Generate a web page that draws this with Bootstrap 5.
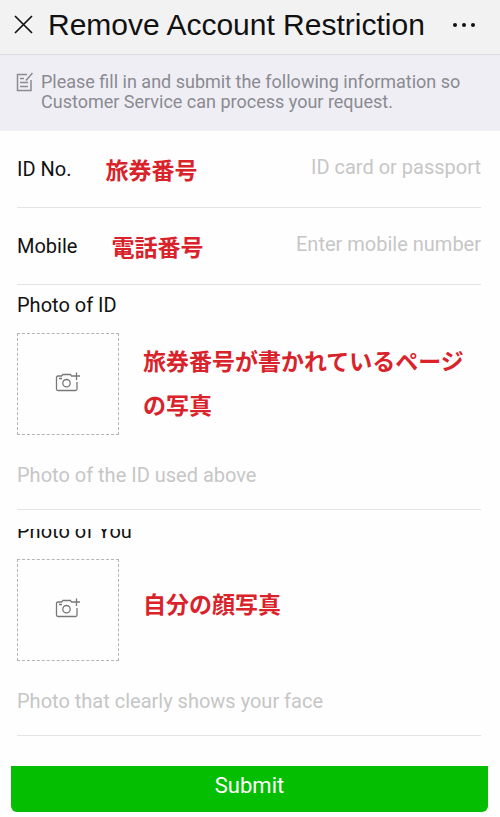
<!DOCTYPE html>
<html lang="en">
<head>
<meta charset="utf-8">
<meta name="viewport" content="width=device-width, initial-scale=1">
<title>Remove Account Restriction</title>
<link href="https://cdn.jsdelivr.net/npm/bootstrap@5.3.0/dist/css/bootstrap.min.css" rel="stylesheet">
<style>
body{font-family:Roboto,"Noto Sans CJK JP",sans-serif;font-size:20px;line-height:24px;color:#111;background:#fefefe}
.topbar{background:#f2f2f2;border-bottom:1px solid #dddde2;height:55px;padding:0 22px 4px 12px}
.topbar h1{font-family:"Liberation Sans",Arial,sans-serif;font-size:30px;line-height:36px;color:#111;margin-left:14px}
.icon-btn{color:#111;line-height:0}
.notice{background:#efeef5;color:#8a8a90;font-size:18px;line-height:20px;padding:17px 16px 18px;border-bottom:1px solid #f0f0f2}
.field-row{height:77px;border-bottom:1px solid #e4e4e4}
.field-row .note-ja{margin-left:34px}
.field-row .form-control{font-size:20px;line-height:24px;color:#111;box-shadow:none;padding:0 0 5px}
.field-row .form-control::placeholder{color:#c6c6c6;opacity:1}
.form-body{padding:0 19px 0 17px}
.note-ja{font-family:"Noto Sans CJK JP",sans-serif;font-weight:700;font-size:23px;line-height:44px;color:#d9222a}
.photo-block{border-bottom:1px solid #e4e4e4;padding-bottom:22px}
.photo-block .note-ja{padding-bottom:4px}
.photo-block + .photo-block{padding-top:19px}
.photo-block + .photo-block .note-ja{padding-bottom:14px}
.upload{width:102px;height:102px;border:1px dashed #b4b4b4;color:#777}
.hint{color:#c6c6c6}
.cut{height:14px}
.submit-wrap{padding:30px 12px 5px 11px}
.submit{background:#04be02;color:#fff;font-size:22px;line-height:26px;border-radius:0 0 6px 6px;padding:7px 0 13px}
.submit:hover{background:#04a802;color:#fff}
</style>
<script src="https://cdn.jsdelivr.net/npm/bootstrap@5.3.0/dist/js/bootstrap.bundle.min.js"></script>
</head>
<body>
<svg class="d-none" aria-hidden="true">
  <symbol id="camera" viewBox="0 0 26 20">
    <path d="M18.500 4H16.500L15.500 2.500H8L6.500 4H3Q1.500 4 1.500 5.500V17Q1.500 18.500 3 18.500H20.500Q22 18.500 22 17V10M4 6.500H7M21.500 0.500V8M18 4H25" fill="none" stroke="currentColor" stroke-width="1.300"/>
    <circle cx="11.500" cy="11.200" r="3.700" fill="none" stroke="currentColor" stroke-width="1.300"/>
  </symbol>
</svg>
<header class="topbar d-flex align-items-center">
  <button type="button" class="btn p-0 border-0 icon-btn" aria-label="Close">
    <svg width="22" height="22" viewBox="0 0 22 22"><path d="M3 2L20 19M20 2L3 19" stroke="currentColor" stroke-width="1.700" fill="none"/></svg>
  </button>
  <h1 class="mb-0 flex-grow-1 text-nowrap fw-normal">Remove Account Restriction</h1>
  <button type="button" class="btn p-0 border-0 icon-btn" aria-label="More options">
    <svg width="26" height="6" viewBox="0 0 26 6" fill="currentColor"><circle cx="3" cy="3" r="2"/><circle cx="12" cy="3" r="2"/><circle cx="21" cy="3" r="2"/></svg>
  </button>
</header>
<div class="notice d-flex gap-2">
  <svg class="flex-shrink-0" width="17" height="20" viewBox="0 0 17 20" fill="none" stroke="currentColor" stroke-width="1.500"><path d="M11 2.500H1.500V18.500H15V8M16.500 1L10 8.500M4 6.500H8M4 10.500H12M4 14.500H12"/></svg>
  <p class="mb-0">Please fill in and submit the following information so Customer Service can process your request.</p>
</div>
<form>
  <div class="form-body">
    <div class="field-row d-flex align-items-center">
      <label class="text-nowrap flex-shrink-0" for="idno">ID No.</label>
      <span class="note-ja text-nowrap">旅券番号</span>
      <input id="idno" type="text" class="form-control border-0 bg-transparent text-end" placeholder="ID card or passport">
    </div>
    <div class="field-row d-flex align-items-center">
      <label class="text-nowrap flex-shrink-0" for="mobile">Mobile</label>
      <span class="note-ja text-nowrap">電話番号</span>
      <input id="mobile" type="tel" class="form-control border-0 bg-transparent text-end" placeholder="Enter mobile number">
    </div>
    <section class="photo-block pt-2">
      <div id="l1">Photo of ID</div>
      <div class="d-flex mt-3 align-items-center">
        <button type="button" class="btn upload rounded-0 p-0 pb-1 flex-shrink-0 d-flex align-items-center justify-content-center" aria-labelledby="l1"><svg width="26" height="20"><use href="#camera"/></svg></button>
        <div class="note-ja ms-4">旅券番号が書かれているページの写真</div>
      </div>
      <p class="hint mb-0 mt-4 pt-1">Photo of the ID used above</p>
    </section>
    <section class="photo-block">
      <div class="cut d-flex align-items-end overflow-hidden" id="l2">Photo of You</div>
      <div class="d-flex mt-3 align-items-center">
        <button type="button" class="btn upload rounded-0 p-0 pb-1 flex-shrink-0 d-flex align-items-center justify-content-center" aria-labelledby="l2"><svg width="26" height="20"><use href="#camera"/></svg></button>
        <div class="note-ja ms-4">自分の顔写真</div>
      </div>
      <p class="hint mb-0 mt-4 pt-1">Photo that clearly shows your face</p>
    </section>
  </div>
  <div class="submit-wrap">
    <button type="submit" class="btn submit border-0 w-100">Submit</button>
  </div>
</form>
</body>
</html>
